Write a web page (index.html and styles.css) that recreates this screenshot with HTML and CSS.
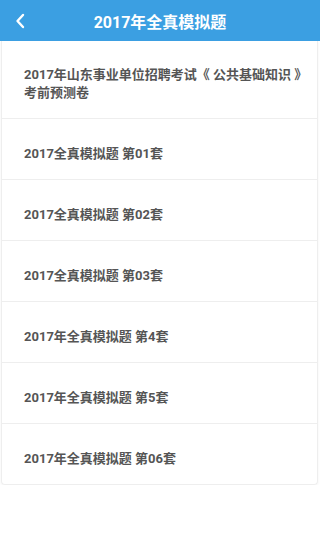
FILE: index.html
```html
<!DOCTYPE html>
<html lang="zh-CN">
   <head>
      <meta charset="utf-8">
      <title>2017年全真模拟题</title>
      <link rel="stylesheet" href="styles.css">
   </head>
   <body>
      <!-- Header -->
      <div class="header">
         <span class="back">
            <svg width="10" height="16" viewBox="0 0 10 16">
               <path d="M8 2 L2.5 8 L8 14" fill="none" stroke="#fff" stroke-width="2.4" stroke-linecap="round" stroke-linejoin="round"/>
            </svg>
         </span>
         <h1>2017年全真模拟题</h1>
      </div>

      <!-- Paper list -->
      <div class="paper-list">
         <div class="paper-item first">2017年山东事业单位招聘考试《 公共基础知识 》<br>考前预测卷</div>
         <div class="paper-item">2017全真模拟题 第01套</div>
         <div class="paper-item">2017全真模拟题 第02套</div>
         <div class="paper-item">2017全真模拟题 第03套</div>
         <div class="paper-item">2017年全真模拟题 第4套</div>
         <div class="paper-item">2017年全真模拟题 第5套</div>
         <div class="paper-item">2017年全真模拟题 第06套</div>
      </div>
   </body>
</html>
```

FILE: styles.css
```css
/* Global Styles */
body {
    font-family: Roboto, "Noto Sans CJK SC", sans-serif;
    margin: 0;
    padding: 0;
    background-color: #fff;
    color: #555;
}

/* Header */
.header {
    height: 41px;
    background-color: #3b9fe2;
    display: flex;
    align-items: center;
    justify-content: center;
    position: relative;
}

.header h1 {
    margin: 0;
    color: #fff;
    font-size: 16px;
    font-weight: bold;
}

.back {
    position: absolute;
    left: 15px;
    top: 13px;
    display: flex;
}

/* List */
.paper-list {
    margin: 0 2px 0 1px;
    border: 1px solid #eee;
    border-top: none;
    border-radius: 0 0 4px 4px;
    box-shadow: 0 1px 3px rgba(0, 0, 0, 0.05);
}

.paper-item {
    height: 61px;
    box-sizing: border-box;
    padding: 26px 22px 0 22px;
    font-size: 13px;
    font-weight: bold;
    line-height: 18px;
    color: #555;
    border-top: 1px solid #eee;
    white-space: nowrap;
}

.paper-item.first {
    height: 77px;
    border-top: none;
    padding: 25px 10px 0 22px;
}
```
